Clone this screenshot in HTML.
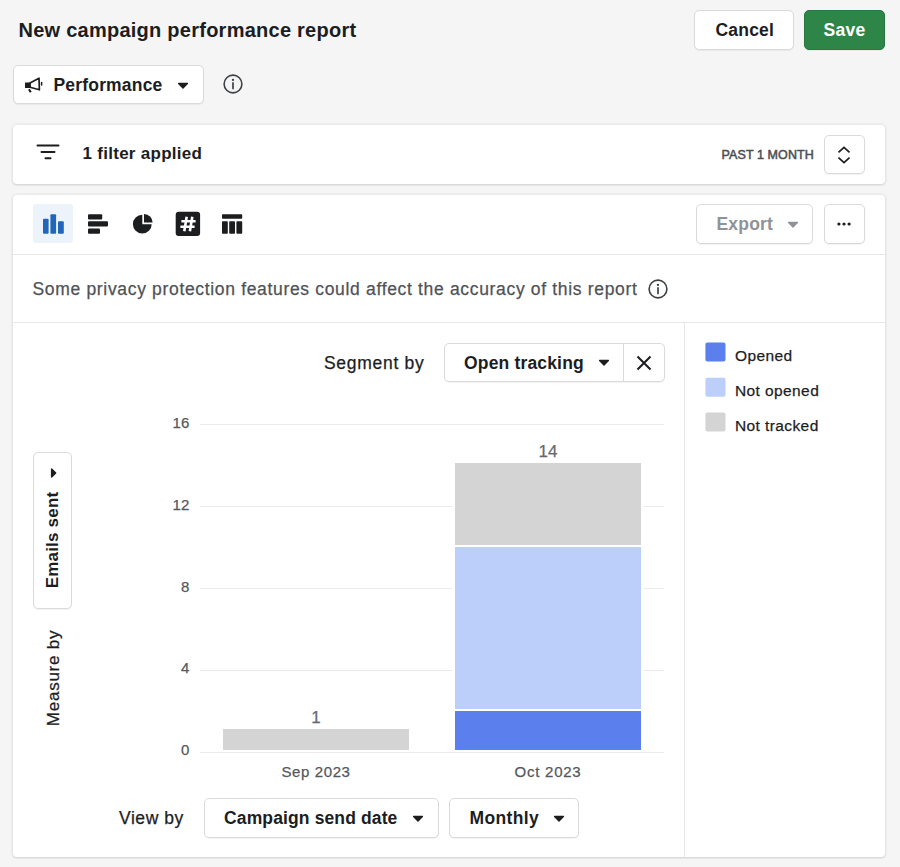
<!DOCTYPE html>
<html lang="en">
<head>
<meta charset="utf-8">
<title>New campaign performance report</title>
<style>
*{box-sizing:border-box;margin:0;padding:0}
html,body{width:900px;height:867px;overflow:hidden}
body{background:#f5f5f6;font-family:"Liberation Sans",Arial,sans-serif;color:#1c1d1f;position:relative}
.abs{position:absolute}
.t{position:absolute;white-space:nowrap;line-height:20px;height:20px;-webkit-text-stroke:0.25px currentColor}
.t.b{-webkit-text-stroke:0}
.b{font-weight:700}
.btn{position:absolute;background:#fff;border:1px solid #d9dadc;border-radius:5px;box-shadow:0 1px 1px rgba(0,0,0,.05)}
.card{position:absolute;background:#fff;border-radius:4px;box-shadow:0 0 0 2px rgba(0,0,0,.03),0 1px 2px rgba(0,0,0,.1)}
.hl{position:absolute;height:1px;background:#e6e7e8}
.vl{position:absolute;width:1px;background:#e6e7e8}
.grid{position:absolute;left:200px;width:464px;height:1px;background:#ebebec}
.yl{position:absolute;width:40px;left:149.3px;text-align:right;font-size:15px;line-height:20px;color:#55585c;-webkit-text-stroke:0.25px currentColor}
.sw{position:absolute;left:705.4px;width:20px;height:19.2px;border-radius:2px}
svg{position:absolute;overflow:visible}
</style>
</head>
<body>

<!-- header -->
<div class="t b" id="title" style="left:18.5px;top:20px;font-size:20px;letter-spacing:0.25px">New campaign performance report</div>

<div class="btn" style="left:694px;top:10px;width:100px;height:40px"></div>
<div class="t b" id="cancel" style="left:715.5px;top:20px;font-size:17.5px;letter-spacing:0.2px">Cancel</div>
<div class="btn" style="left:804px;top:10px;width:81px;height:40px;background:#2e8548;border-color:#26783f"></div>
<div class="t b" id="save" style="left:823.5px;top:20px;font-size:17.5px;color:#fff;letter-spacing:0.25px">Save</div>

<!-- performance dropdown -->
<div class="btn" style="left:13px;top:65px;width:191px;height:39px"></div>
<svg style="left:24px;top:75px" width="20" height="20" viewBox="0 0 20 20"><path d="M1.6 8 H6 V12.4 H1.6 Z" fill="#1c1d1f" stroke="#1c1d1f" stroke-width="1.2" stroke-linejoin="round"/><path d="M6 8 L15 3.2 L15.4 14.8 L6 12.3 Z" fill="none" stroke="#1c1d1f" stroke-width="1.7" stroke-linejoin="round"/><path d="M17.6 7.6 V10" stroke="#1c1d1f" stroke-width="1.5" stroke-linecap="round"/><path d="M4.9 14.2 L6.8 17.2" stroke="#1c1d1f" stroke-width="2.1" stroke-linecap="butt"/></svg>
<div class="t b" id="perf" style="left:53.5px;top:75px;font-size:17.5px;letter-spacing:0.18px">Performance</div>
<svg style="left:177.3px;top:81.6px" width="12" height="7" viewBox="0 0 12 7"><path d="M1.6 1.4 H10.4 L6 6 Z" fill="#1c1d1f" stroke="#1c1d1f" stroke-width="1.4" stroke-linejoin="round"/></svg>
<svg style="left:223.4px;top:74.4px" width="20" height="20" viewBox="0 0 20 20"><circle cx="10" cy="10" r="8.9" fill="none" stroke="#3e4145" stroke-width="1.6"/><circle cx="10" cy="5.9" r="1.15" fill="#3e4145"/><path d="M10 8.8 V14.4" stroke="#3e4145" stroke-width="1.7" stroke-linecap="round"/></svg>

<!-- filter card -->
<div class="card" style="left:13px;top:125px;width:872px;height:59px"></div>
<svg style="left:36px;top:143px" width="24" height="18" viewBox="0 0 24 18"><path d="M1.5 2.5 H22.5 M5.5 9 H18.5 M9.5 15.2 H14.5" stroke="#1c1d1f" stroke-width="2" stroke-linecap="round"/></svg>
<div class="t b" id="filt" style="left:82.5px;top:144px;font-size:17px;letter-spacing:0.28px">1 filter applied</div>
<div class="t" id="past" style="left:721.5px;top:145px;font-size:12.5px;color:#4b4e52;-webkit-text-stroke:0.5px #4b4e52;letter-spacing:0.1px">PAST 1 MONTH</div>
<div class="btn" style="left:824px;top:135px;width:41px;height:39px"></div>
<svg style="left:836.2px;top:144.5px" width="16" height="20" viewBox="0 0 16 20"><path d="M2.5 7.4 L8 2.4 L13.5 7.4 M2.5 12.6 L8 17.6 L13.5 12.6" fill="none" stroke="#1c1d1f" stroke-width="1.7" stroke-linejoin="miter"/></svg>

<!-- chart card -->
<div class="card" style="left:13px;top:195px;width:872px;height:662px"></div>
<div class="abs" style="left:33px;top:204px;width:40px;height:39px;background:#edf3fb;border-radius:3px"></div>
<svg style="left:42.5px;top:214px" width="21" height="20" viewBox="0 0 21 20"><rect x="0" y="4.8" width="5.6" height="15" rx="1" fill="#2166b8"/><rect x="7.4" y="0.2" width="5.7" height="19.6" rx="1" fill="#2166b8"/><rect x="15" y="7.3" width="5.8" height="12.5" rx="1" fill="#2166b8"/></svg>
<svg style="left:87.5px;top:214px" width="20" height="20" viewBox="0 0 20 20"><rect x="0" y="0.2" width="14.2" height="5.2" rx="1" fill="#1c1d1f"/><rect x="0" y="7.3" width="20" height="5.3" rx="1" fill="#1c1d1f"/><rect x="0" y="14.6" width="12" height="5.2" rx="1" fill="#1c1d1f"/></svg>
<svg style="left:132px;top:213px" width="22" height="22" viewBox="0 0 22 22"><path d="M10.3 1.8 A9.4 9.4 0 1 0 19.7 11.2 H10.3 Z" fill="#1c1d1f"/><path d="M12 1 A8.6 8.6 0 0 1 20.6 9.6 H12 Z" fill="#1c1d1f"/></svg>
<svg style="left:176px;top:212px" width="24" height="24" viewBox="0 0 24 24"><rect x="-0.3" y="-0.3" width="24.4" height="24.2" rx="3" fill="#1c1d1f"/><path d="M10.7 4.8 L8.3 19.2 M16.3 4.8 L13.9 19.2 M5.4 9.3 H19.6 M4.4 14.8 H18.6" stroke="#fff" stroke-width="2.6"/></svg>
<svg style="left:222px;top:214px" width="20" height="20" viewBox="0 0 20 20"><rect x="0" y="0.2" width="20.2" height="4.6" rx="0.8" fill="#1c1d1f"/><rect x="0" y="7.3" width="5.8" height="12.5" rx="0.8" fill="#1c1d1f"/><rect x="7.2" y="7.3" width="5.8" height="12.5" rx="0.8" fill="#1c1d1f"/><rect x="14.4" y="7.3" width="5.8" height="12.5" rx="0.8" fill="#1c1d1f"/></svg>

<div class="btn" style="left:696px;top:204px;width:117px;height:40px"></div>
<div class="t b" id="export" style="left:716.5px;top:214px;font-size:17.5px;color:#8f9296;letter-spacing:0.2px">Export</div>
<svg style="left:787px;top:221px" width="12" height="7" viewBox="0 0 12 7"><path d="M1.6 1.4 H10.4 L6 6 Z" fill="#8f9296" stroke="#8f9296" stroke-width="1.4" stroke-linejoin="round"/></svg>
<div class="btn" style="left:824px;top:204px;width:41px;height:40px"></div>
<svg style="left:837px;top:222px" width="14" height="4" viewBox="0 0 14 4"><circle cx="1.9" cy="2" r="1.6" fill="#1c1d1f"/><circle cx="7" cy="2" r="1.6" fill="#1c1d1f"/><circle cx="12.1" cy="2" r="1.6" fill="#1c1d1f"/></svg>

<div class="hl" style="left:13px;top:254px;width:872px"></div>
<div class="t" id="priv" style="left:32.5px;top:279px;font-size:17.5px;color:#4f5256;letter-spacing:0.67px">Some privacy protection features could affect the accuracy of this report</div>
<svg style="left:647.6px;top:278.5px" width="20" height="20" viewBox="0 0 20 20"><circle cx="10" cy="10" r="8.9" fill="none" stroke="#3e4145" stroke-width="1.6"/><circle cx="10" cy="5.9" r="1.15" fill="#3e4145"/><path d="M10 8.8 V14.4" stroke="#3e4145" stroke-width="1.7" stroke-linecap="round"/></svg>
<div class="hl" style="left:13px;top:322px;width:872px"></div>
<div class="vl" style="left:684px;top:322px;height:535px"></div>

<!-- segment by -->
<div class="t" id="seg" style="left:324px;top:352.6px;font-size:17.5px;letter-spacing:0.7px">Segment by</div>
<div class="btn" style="left:444px;top:343px;width:221px;height:39px"></div>
<div class="vl" style="left:623px;top:344px;height:37px;background:#d9dadc"></div>
<div class="t b" id="open" style="left:464px;top:352.5px;font-size:17.5px;letter-spacing:0.17px">Open tracking</div>
<svg style="left:597.6px;top:359.2px" width="12" height="7" viewBox="0 0 12 7"><path d="M1.6 1.4 H10.4 L6 6 Z" fill="#1c1d1f" stroke="#1c1d1f" stroke-width="1.4" stroke-linejoin="round"/></svg>
<svg style="left:636px;top:354.5px" width="16" height="16" viewBox="0 0 16 16"><path d="M1.5 1.5 L14.5 14.5 M14.5 1.5 L1.5 14.5" stroke="#1c1d1f" stroke-width="2"/></svg>

<!-- legend -->
<svg style="left:705px;top:342px" width="21" height="91" viewBox="0 0 21 91"><rect x="0.4" y="0.5" width="20.1" height="19.1" rx="2" fill="#5b80ee"/><rect x="0.4" y="35.7" width="20.1" height="19.1" rx="2" fill="#bccffb"/><rect x="0.4" y="70.4" width="20.1" height="19.1" rx="2" fill="#d4d4d4"/></svg>
<div class="t" id="lg1" style="left:735px;top:345.7px;font-size:15.5px;letter-spacing:0.4px">Opened</div>
<div class="t" id="lg2" style="left:735px;top:380.7px;font-size:15.5px;letter-spacing:0.4px">Not opened</div>
<div class="t" id="lg3" style="left:735px;top:415.7px;font-size:15.5px;letter-spacing:0.4px">Not tracked</div>

<!-- chart -->
<div class="grid" style="top:424px"></div>
<div class="grid" style="top:506px"></div>
<div class="grid" style="top:588px"></div>
<div class="grid" style="top:670px"></div>
<div class="grid" style="top:752px"></div>
<div class="yl" style="top:413px">16</div>
<div class="yl" style="top:495px">12</div>
<div class="yl" style="top:577px">8</div>
<div class="yl" style="top:658px">4</div>
<div class="yl" style="top:740px">0</div>

<div class="abs" style="left:223px;top:729px;width:186px;height:21px;background:#d4d4d4"></div>
<div class="abs" style="left:455px;top:463px;width:186px;height:82px;box-shadow:-3px 0 0 #fff,3px 0 0 #fff;background:#d4d4d4"></div>
<div class="abs" style="left:455px;top:547px;width:186px;height:162px;box-shadow:-3px 0 0 #fff,3px 0 0 #fff;background:#bccffb"></div>
<div class="abs" style="left:455px;top:711px;width:186px;height:39px;box-shadow:-3px 0 0 #fff,3px 0 0 #fff;background:#5b80ee"></div>
<div class="t" id="v1" style="left:266px;width:100px;text-align:center;top:707.5px;font-size:17px;color:#66696d">1</div>
<div class="t" id="v14" style="left:498px;width:100px;text-align:center;top:441.5px;font-size:17px;color:#66696d">14</div>
<div class="t" id="sep" style="left:266px;width:100px;text-align:center;top:762px;font-size:15px;color:#55585c;letter-spacing:0.6px">Sep 2023</div>
<div class="t" id="oct" style="left:498px;width:100px;text-align:center;top:762px;font-size:15px;color:#55585c;letter-spacing:0.75px">Oct 2023</div>

<!-- measure by -->
<div class="btn" style="left:33px;top:452px;width:39px;height:157px"></div>
<div class="t b" id="em" style="left:53px;top:540px;font-size:17px;transform:translate(-50%,-50%) rotate(-90deg);letter-spacing:0.2px">Emails sent</div>
<svg style="left:50px;top:467px" width="7" height="12" viewBox="0 0 7 12"><path d="M1.6 2 V10 L5.7 6 Z" fill="#1c1d1f" stroke="#1c1d1f" stroke-width="1.4" stroke-linejoin="round"/></svg>
<div class="t" id="me" style="left:53.5px;top:677.5px;transform:translate(-50%,-50%) rotate(-90deg);font-size:17px;letter-spacing:0.75px">Measure by</div>

<!-- view by -->
<div class="t" id="view" style="left:119px;top:808px;font-size:17.5px;letter-spacing:0.55px">View by</div>
<div class="btn" style="left:204px;top:798px;width:235px;height:40px"></div>
<div class="t b" id="camp" style="left:224px;top:808px;font-size:17.5px;letter-spacing:0.13px">Campaign send date</div>
<svg style="left:412px;top:815px" width="12" height="7" viewBox="0 0 12 7"><path d="M1.6 1.4 H10.4 L6 6 Z" fill="#1c1d1f" stroke="#1c1d1f" stroke-width="1.4" stroke-linejoin="round"/></svg>
<div class="btn" style="left:449px;top:798px;width:130px;height:40px"></div>
<div class="t b" id="mon" style="left:469.5px;top:808px;font-size:17.5px;letter-spacing:0.38px">Monthly</div>
<svg style="left:553px;top:815px" width="12" height="7" viewBox="0 0 12 7"><path d="M1.6 1.4 H10.4 L6 6 Z" fill="#1c1d1f" stroke="#1c1d1f" stroke-width="1.4" stroke-linejoin="round"/></svg>

</body>
</html>
